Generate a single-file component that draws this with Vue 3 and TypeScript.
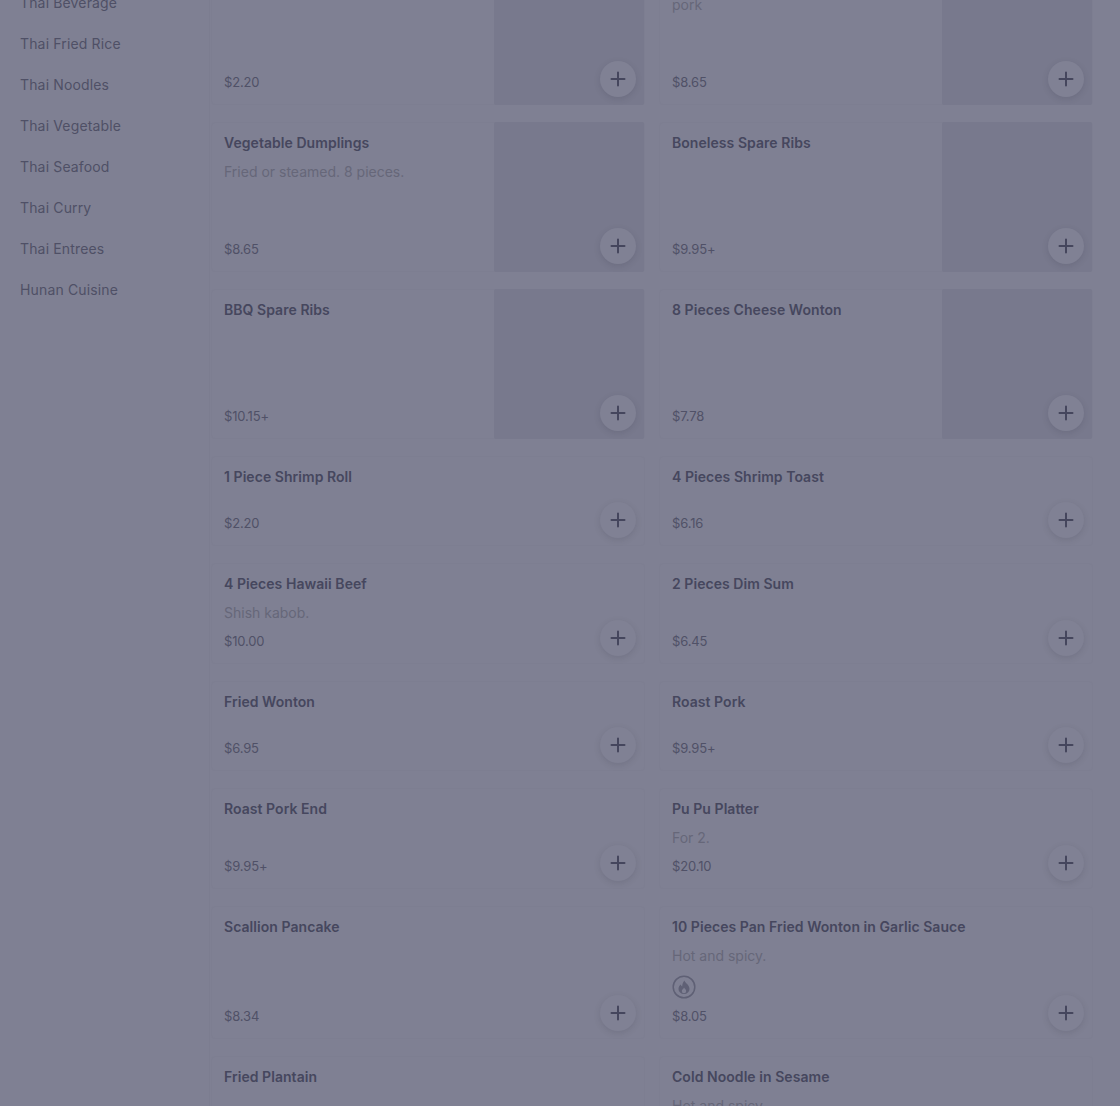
<template>
  <div class="page">
    <aside class="sidebar">
      <a v-for="cat in categories" :key="cat" class="cat">{{ cat }}</a>
    </aside>
    <main class="grid">
      <article v-for="item in items" :key="item.name" class="card" :class="{ 'has-image': item.image }">
        <div class="info">
          <h3 class="name">{{ item.name }}</h3>
          <p v-if="item.desc" class="desc">{{ item.desc }}</p>
          <span v-if="item.spicy" class="spicy">
            <svg width="24" height="24" viewBox="0 0 24 24" fill="none">
              <circle cx="12" cy="12" r="10.800" stroke="#5f6075" stroke-width="1.500" />
              <path d="M12.500 5.500c.4 2.400 5 4.400 5 8.400a5.500 5.200 0 0 1-11 0c0-2 1.100-3.400 2.300-4.400.2 1 .7 1.700 1.400 2 .1-2.400.7-4.200 2.300-6z" fill="#5f6075" />
              <path d="M12 12.500c.4 1 2.200 1.900 2.200 3.500a2.200 2.200 0 0 1-4.400 0c0-1.500 1.800-2.100 2.200-3.500z" fill="#7f8093" />
            </svg>
          </span>
          <span class="price">{{ item.price }}</span>
        </div>
        <div v-if="item.image" class="thumb"></div>
        <button class="add" type="button" aria-label="Add">
          <svg width="16" height="16" viewBox="0 0 16 16" fill="none">
            <path d="M8 1.500v13M1.500 8h13" stroke="#45465d" stroke-width="2" stroke-linecap="round" />
          </svg>
        </button>
      </article>
    </main>
  </div>
</template>

<script setup lang="ts">
interface Item {
  name: string
  desc?: string
  price: string
  image?: boolean
  spicy?: boolean
}

const categories: string[] = [
  'Thai Beverage',
  'Thai Fried Rice',
  'Thai Noodles',
  'Thai Vegetable',
  'Thai Seafood',
  'Thai Curry',
  'Thai Entrees',
  'Hunan Cuisine',
]

const items: Item[] = [
  { name: 'Egg Roll', price: '$2.20', image: true },
  { name: 'Egg Roll with Roast Pork', desc: 'pork', price: '$8.65', image: true },
  { name: 'Vegetable Dumplings', desc: 'Fried or steamed. 8 pieces.', price: '$8.65', image: true },
  { name: 'Boneless Spare Ribs', price: '$9.95+', image: true },
  { name: 'BBQ Spare Ribs', price: '$10.15+', image: true },
  { name: '8 Pieces Cheese Wonton', price: '$7.78', image: true },
  { name: '1 Piece Shrimp Roll', price: '$2.20' },
  { name: '4 Pieces Shrimp Toast', price: '$6.16' },
  { name: '4 Pieces Hawaii Beef', desc: 'Shish kabob.', price: '$10.00' },
  { name: '2 Pieces Dim Sum', price: '$6.45' },
  { name: 'Fried Wonton', price: '$6.95' },
  { name: 'Roast Pork', price: '$9.95+' },
  { name: 'Roast Pork End', price: '$9.95+' },
  { name: 'Pu Pu Platter', desc: 'For 2.', price: '$20.10' },
  { name: 'Scallion Pancake', price: '$8.34' },
  { name: '10 Pieces Pan Fried Wonton in Garlic Sauce', desc: 'Hot and spicy.', price: '$8.05', spicy: true },
  { name: 'Fried Plantain', price: '$5.95' },
  { name: 'Cold Noodle in Sesame', desc: 'Hot and spicy.', price: '$8.05', spicy: true },
]
</script>

<style scoped>
.page {
  display: flex;
  align-items: flex-start;
  height: 1106px;
  overflow: hidden;
  background: #7f8093;
  font-family: Inter, "Liberation Sans", sans-serif;
}

.sidebar {
  flex: 0 0 210px;
  align-self: stretch;
  display: flex;
  flex-direction: column;
  gap: 21px;
  margin-top: -7px;
  padding-left: 20px;
  border-right: 1px solid #7c7d90;
  box-sizing: border-box;
}

.cat {
  font-size: 14px;
  line-height: 20px;
  letter-spacing: 0.15px;
  color: #4f5066;
}

.grid {
  flex: 1;
  display: grid;
  grid-template-columns: 434px 434px;
  column-gap: 14px;
  row-gap: 17px;
  align-content: start;
  margin-top: -45px;
  padding-left: 1px;
}

.card {
  position: relative;
  display: flex;
  min-height: 90px;
  box-sizing: border-box;
  border: 1px solid #7d7e91;
  border-radius: 4px;
}

.has-image {
  height: 150px;
}

.info {
  flex: 1;
  display: flex;
  flex-direction: column;
  padding: 11px 12px 12px;
}

.name {
  margin: 0;
  font-size: 14px;
  line-height: 18px;
  font-weight: 600;
  letter-spacing: 0.05px;
  color: #46475e;
}

.desc {
  margin: 10px 0 0;
  font-size: 14px;
  line-height: 20px;
  color: #666779;
}

.spicy {
  display: flex;
  margin: 9px 0 -1px;
}

.price {
  margin-top: auto;
  padding-top: 8px;
  font-size: 13px;
  line-height: 20px;
  letter-spacing: -0.15px;
  color: #505167;
}

.thumb {
  flex: 0 0 150px;
  margin: -1px 0 -1px -1px;
  border-radius: 2px;
  background: #78798d;
}

.add {
  position: absolute;
  right: 8px;
  bottom: 7px;
  display: flex;
  align-items: center;
  justify-content: center;
  width: 36px;
  height: 36px;
  padding: 0;
  border: 0;
  border-radius: 50%;
  background: #808194;
  box-shadow: 0 2px 6px rgba(50, 50, 70, 0.16);
}
</style>

<style>
html,
body {
  overflow: hidden;
}
</style>
